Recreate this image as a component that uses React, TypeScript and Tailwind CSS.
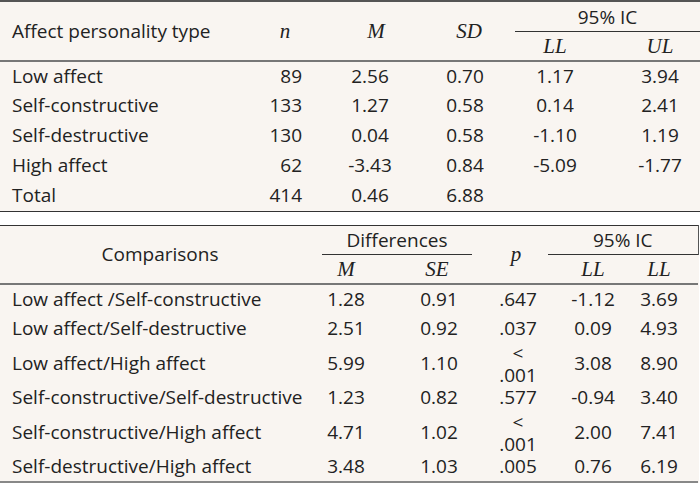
import React from 'react';

const sans = "font-['Open_Sans','Noto_Sans',sans-serif]";
const ital = "font-['Liberation_Serif','DejaVu_Serif',serif] italic text-[21px]";

const types = [
  { name: 'Low affect', n: '89', m: '2.56', sd: '0.70', ll: '1.17', ul: '3.94' },
  { name: 'Self-constructive', n: '133', m: '1.27', sd: '0.58', ll: '0.14', ul: '2.41' },
  { name: 'Self-destructive', n: '130', m: '0.04', sd: '0.58', ll: '-1.10', ul: '1.19' },
  { name: 'High affect', n: '62', m: '-3.43', sd: '0.84', ll: '-5.09', ul: '-1.77' },
  { name: 'Total', n: '414', m: '0.46', sd: '6.88', ll: '', ul: '' },
];

const comparisons = [
  { name: 'Low affect /Self-constructive', m: '1.28', se: '0.91', p: '.647', ll: '-1.12', ul: '3.69' },
  { name: 'Low affect/Self-destructive', m: '2.51', se: '0.92', p: '.037', ll: '0.09', ul: '4.93' },
  { name: 'Low affect/High affect', m: '5.99', se: '1.10', p: '< .001', ll: '3.08', ul: '8.90' },
  { name: 'Self-constructive/Self-destructive', m: '1.23', se: '0.82', p: '.577', ll: '-0.94', ul: '3.40' },
  { name: 'Self-constructive/High affect', m: '4.71', se: '1.02', p: '< .001', ll: '2.00', ul: '7.41' },
  { name: 'Self-destructive/High affect', m: '3.48', se: '1.03', p: '.005', ll: '0.76', ul: '6.19' },
];

const App: React.FC = () => {
  return (
    <div className={`w-[700px] h-[485px] bg-white text-[#222] text-[19px] leading-[26px] ${sans}`}>
      {/* Descriptives */}
      <table className="w-[700px] table-fixed border-collapse bg-[#f9f5f1]">
        <colgroup>
          <col className="w-[250px]" />
          <col className="w-[70px]" />
          <col className="w-[100px]" />
          <col className="w-[90px]" />
          <col className="w-[90px]" />
          <col className="w-[100px]" />
        </colgroup>
        <thead className="border-t-2 border-[#555]">
          <tr className="h-[31px]">
            <th rowSpan={2} className="pl-[12px] text-left font-normal border-b-2 border-[#777]">Affect personality type</th>
            <th rowSpan={2} className={`${ital} font-normal border-b-2 border-[#777]`}>n</th>
            <th rowSpan={2} className={`${ital} font-normal pl-[12px] border-b-2 border-[#777]`}>M</th>
            <th rowSpan={2} className={`${ital} font-normal pl-[8px] border-b-2 border-[#777]`}>SD</th>
            <th colSpan={2} className="font-normal p-0 align-bottom">
              <div className="ml-[5px] pt-[3px] pb-[3px] border-b border-[#333] leading-[22px]">95% IC</div>
            </th>
          </tr>
          <tr className="h-[29px]">
            <th className={`${ital} font-normal border-b-2 border-[#777]`}>LL</th>
            <th className={`${ital} font-normal pl-[20px] border-b-2 border-[#777]`}>UL</th>
          </tr>
        </thead>
        <tbody className="border-b-[1.5px] border-[#333]">
          {types.map((r) => (
            <tr key={r.name} className="h-[30px]">
              <td className="pl-[12px] pb-[2px]">{r.name}</td>
              <td className="text-right pr-[18px] pb-[2px]">{r.n}</td>
              <td className="text-center pb-[2px]">{r.m}</td>
              <td className="text-center pb-[2px]">{r.sd}</td>
              <td className="text-center pb-[2px]">{r.ll}</td>
              <td className="text-center pl-[20px] pb-[2px]">{r.ul}</td>
            </tr>
          ))}
        </tbody>
      </table>

      <div className="h-[13px]" />

      {/* Post hoc comparisons */}
      <table className="w-[698px] table-fixed border-collapse bg-[#f9f5f1]">
        <colgroup>
          <col className="w-[320px]" />
          <col className="w-[70px]" />
          <col className="w-[82px]" />
          <col className="w-[76px]" />
          <col className="w-[80px]" />
          <col className="w-[70px]" />
        </colgroup>
        <thead className="border-t-[1.5px] border-[#333]">
          <tr className="h-[30px]">
            <th rowSpan={2} className="font-normal text-center border-b-2 border-[#777]">Comparisons</th>
            <th colSpan={2} className="font-normal p-0 align-bottom">
              <div className="ml-[2px] pt-[1px] pb-[3px] border-b border-[#333] leading-[22px]">Differences</div>
            </th>
            <th rowSpan={2} className={`${ital} font-normal pl-[12px] border-b-2 border-[#777]`}>p</th>
            <th colSpan={2} className="font-normal p-0 align-bottom border-r border-[#555]">
              <div className="pt-[1px] pb-[3px] border-b border-[#333] leading-[22px]">95% IC</div>
            </th>
          </tr>
          <tr className="h-[29px]">
            <th className={`${ital} font-normal pr-[18px] border-b-2 border-[#777]`}>M</th>
            <th className={`${ital} font-normal pl-[12px] border-b-2 border-[#777]`}>SE</th>
            <th className={`${ital} font-normal pl-[10px] border-b-2 border-[#777]`}>LL</th>
            <th className={`${ital} font-normal pr-[8px] border-b-2 border-[#777]`}>LL</th>
          </tr>
        </thead>
        <tbody className="border-b-2 border-[#888]">
          {comparisons.map((r) => {
            const split = r.p.startsWith('<');
            return (
              <tr key={r.name} className={split ? 'h-[39px]' : 'h-[30px]'}>
                <td className="pl-[12px] pb-[2px] whitespace-nowrap">{r.name}</td>
                <td className="text-center pr-[18px] pb-[2px]">{r.m}</td>
                <td className="text-center pl-[16px] pb-[2px]">{r.se}</td>
                {split ? (
                  <td className="text-center pl-[16px] p-0">
                    <div className="h-[39px] flex flex-col justify-center leading-[22px]">
                      <span>&lt;</span>
                      <span>.001</span>
                    </div>
                  </td>
                ) : (
                  <td className="text-center pl-[16px] pb-[2px]">{r.p}</td>
                )}
                <td className="text-center pl-[10px] pb-[2px]">{r.ll}</td>
                <td className="text-center pr-[8px] pb-[2px]">{r.ul}</td>
              </tr>
            );
          })}
        </tbody>
      </table>
    </div>
  );
};

export default App;
